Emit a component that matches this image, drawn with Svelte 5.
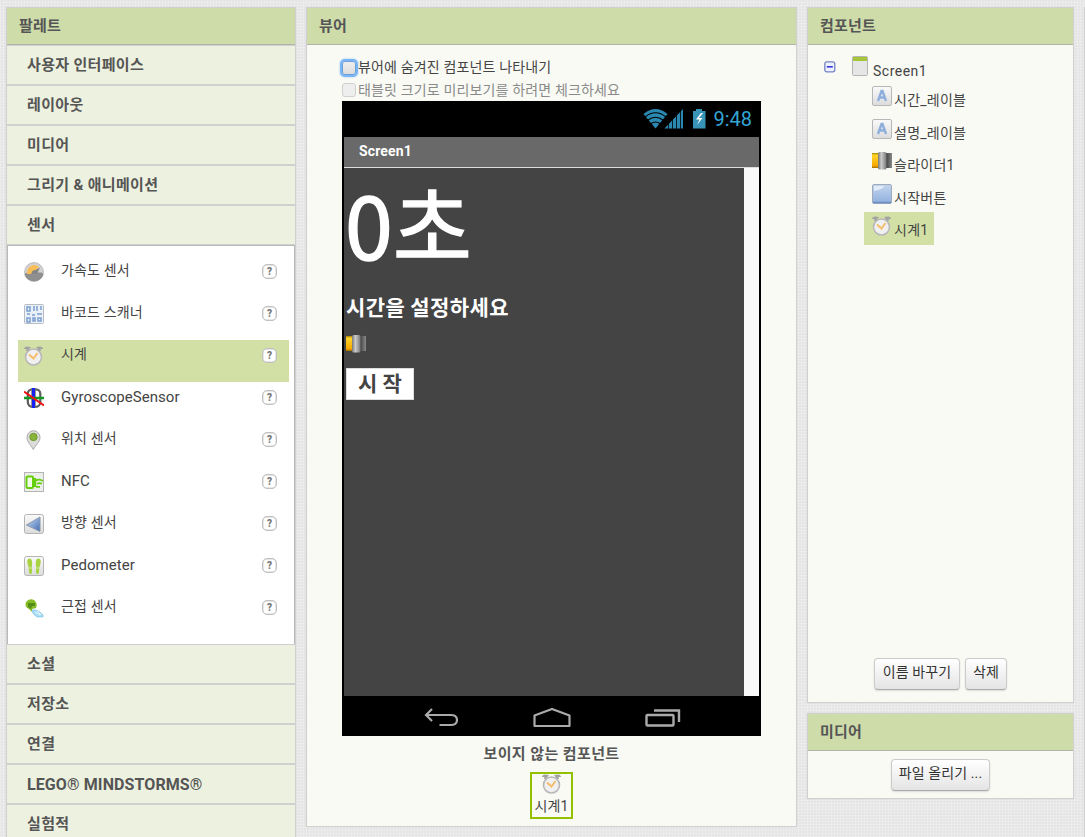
<script>
  const groupsTop = ['사용자 인터페이스', '레이아웃', '미디어', '그리기 & 애니메이션', '센서'];
  const groupsBottom = ['소셜', '저장소', '연결', 'LEGO® MINDSTORMS®', '실험적'];
  const sensors = [
    { icon: 'accel', label: '가속도 센서' },
    { icon: 'barcode', label: '바코드 스캐너' },
    { icon: 'clock', label: '시계', active: true },
    { icon: 'gyro', label: 'GyroscopeSensor', latin: true },
    { icon: 'location', label: '위치 센서' },
    { icon: 'nfc', label: 'NFC', latin: true },
    { icon: 'orient', label: '방향 센서' },
    { icon: 'pedo', label: 'Pedometer', latin: true },
    { icon: 'prox', label: '근접 센서' }
  ];
  const tree = [
    { icon: 'label', label: '시간_레이블' },
    { icon: 'label', label: '설명_레이블' },
    { icon: 'slider', label: '슬라이더1' },
    { icon: 'button', label: '시작버튼' },
    { icon: 'clock', label: '시계1', active: true }
  ];
</script>

<svg width="0" height="0" class="defs" aria-hidden="true">
  <defs>
    <linearGradient id="tile" x2="0" y2="1"><stop stop-color="#fafafa" /><stop offset="1" stop-color="#dcdcdc" /></linearGradient>
    <linearGradient id="gold" x2="0" y2="1"><stop stop-color="#a88400" /><stop offset=".15" stop-color="#ffd42a" /><stop offset=".85" stop-color="#f5a800" /><stop offset="1" stop-color="#a06c00" /></linearGradient>
    <linearGradient id="dark" x2="1" y2="0"><stop stop-color="#333" /><stop offset="1" stop-color="#8a8a8a" /></linearGradient>
    <linearGradient id="knob" x2="1" y2="0"><stop stop-color="#777" /><stop offset=".4" stop-color="#ccc" /><stop offset="1" stop-color="#777" /></linearGradient>
    <linearGradient id="blue" x2="0" y2="1"><stop stop-color="#c3d5ee" /><stop offset="1" stop-color="#8fafdd" /></linearGradient>
    <linearGradient id="nav" x2="1" y2="1"><stop stop-color="#cfe0f6" /><stop offset="1" stop-color="#3f6db5" /></linearGradient>
  </defs>
</svg>

{#snippet icon(name)}
  <svg class="icon" width="20" height="20" viewBox="0 0 20 20" fill="none">
    {#if name === 'accel'}
      <circle cx="10" cy="10" r="9.400" fill="#d2d2d2" stroke="#bbb" />
      <path d="M.5 12a9.600 8.500 0 0 0 19 0l-2-1.500H3z" fill="#8f8f8f" />
      <path d="M3 12A7.300 8 0 0 1 15 5l-3.500 4Q8 9 7.500 12z" fill="#f9bd58" />
      <path d="M7.500 12q0-4 4-4l4.500-2.500-3 6.500z" fill="#858585" />
    {:else if name === 'barcode'}
      <rect x=".5" y=".5" width="19" height="19" rx="1" fill="#e9f0f8" stroke="#b9bcc2" />
      <path d="M3 3h3v4H3zM3 14h3v4H3zM9 14h2v3H9zM14 14h3v3h-3zM10 2v5M13 2v5M17 2v4M3 10h3M8 11h3M13 10h5" stroke="#7d9fd0" stroke-width="1.500" />
    {:else if name === 'clock'}
      <path d="M0 3q0-2 3-2.500L7 1 4 5H2l.5-2zM19 3q0-2-3-2.500L12 1l3 4h2l-.5-2z" fill="#a3a3a3" />
      <circle cx="9.500" cy="11" r="8" fill="#f0f0f0" stroke="#b8b8b8" stroke-width="1.600" />
      <path d="M5 8.500l4.500 4 4-5.500" stroke="#f5bd6c" stroke-width="2" />
    {:else if name === 'gyro'}
      <rect x="3.800" y="1.300" width="12.500" height="17.500" rx="4.500" fill="#fff" stroke="#5d5d5d" stroke-width="2.200" />
      <path d="M9.500 0v20" stroke="#777" stroke-width="4.500" />
      <path d="M9.500 0v20" stroke="#1620f5" stroke-width="3" />
      <path d="M0 10h20" stroke="#119a22" stroke-width="2.500" />
      <path d="M0 3.500L20 17.500" stroke="#f01313" stroke-width="2" />
    {:else if name === 'location'}
      <path d="M9.300 19.500C7 15 3 12 3 7.500a6.500 6.800 0 0 1 13 0C16 12 11.500 15 9.300 19.500z" fill="#dcdcdc" stroke="#a9a9a9" />
      <circle cx="9.500" cy="7" r="3.700" fill="#88b43b" stroke="#6e9b2b" />
    {:else if name === 'nfc'}
      <rect x=".5" y=".5" width="19" height="19" fill="#eceee9" stroke="#b5b5b5" />
      <rect x="2.500" y="4.500" width="6.500" height="11.500" rx="1" fill="#f4fbe9" stroke="#65cf0b" stroke-width="2" />
      <path d="M11 6v9" stroke="#65cf0b" stroke-width="2.500" />
      <path d="M12 8.500q3.500-2 7 .5M13 11.800q2.500-1.500 5 0M12 14.800h4" stroke="#65cf0b" stroke-width="1.700" />
    {:else if name === 'orient'}
      <rect x=".5" y=".5" width="19" height="19" rx="2" fill="url(#tile)" stroke="#b5b5b5" />
      <path d="M2.500 11L16 3v14.500z" fill="url(#nav)" stroke="#8d9aac" />
    {:else if name === 'pedo'}
      <rect x=".5" y=".5" width="19" height="19" rx="2" fill="url(#tile)" stroke="#b5b5b5" />
      <path d="M5.500 2.500C8 2.500 8.500 6 8 9.500V16q0 2-1.500 2T5 15.500L4.500 11Q1.500 3 5.500 2.500zM14.500 2.500C12 2.500 11.500 6 12 9.500V16q0 2 1.500 2t1.500-2.500l.5-4.500q3-8-1-8.500z" fill="#a8d23f" />
      <path d="M4.500 12h4M11.500 12h4" stroke="#e4ecd0" stroke-width=".8" />
    {:else if name === 'prox'}
      <path d="M2 4q3-4 8-2 4 3 2 8l-4 1 0 3-3-3Q0 9 2 4z" fill="#86bd26" />
      <path d="M4 5h7v3H8l-1 3-3-2z" fill="#548d16" />
      <path d="M8 12q6-1 11 5v2h-6q-5-3-5-7z" fill="#a9dcf5" stroke="#81c5e8" stroke-width=".7" />
      <path d="M11 14l5 3M13 13l4 4" stroke="#fff" stroke-width=".7" />
    {:else if name === 'label'}
      <rect x=".5" y=".5" width="19" height="19" rx="1.500" fill="url(#tile)" stroke="#b7b7b7" />
      <path d="M6 15l3.500-10h1l3.500 10M7.500 11.500h5" stroke="#8eaedb" stroke-width="2.400" />
    {:else if name === 'slider'}
      <rect x="0" y="2" width="8" height="15" fill="url(#gold)" />
      <rect x="13" y="2" width="7" height="15" fill="url(#dark)" />
      <rect x="6" y="1" width="8.500" height="17.500" rx="1.500" fill="url(#knob)" />
    {:else if name === 'button'}
      <rect x=".5" y=".5" width="19" height="19" rx="1.500" fill="url(#blue)" stroke="#a0aabc" />
      <path d="M2 2h10q0 3-10 5z" fill="#e2ebf8" />
      <path d="M1 18.500h18" stroke="#6e8fc2" stroke-width="1.500" />
    {/if}
  </svg>
{/snippet}

<div class="page">
  <section class="panel palette">
    <h2>팔레트</h2>
    {#each groupsTop as g}
      <div class="group">{g}</div>
    {/each}
    <div class="sensors">
      {#each sensors as s}
        <div class="sensor" class:active={s.active}>
          {@render icon(s.icon)}
          <span class="name" class:latin={s.latin}>{s.label}</span>
          <span class="help">?</span>
        </div>
      {/each}
    </div>
    {#each groupsBottom as g}
      <div class="group" class:lego={g.startsWith('LEGO')}>{g}</div>
    {/each}
  </section>

  <section class="panel viewer">
    <h2>뷰어</h2>
    <div class="viewbody">
      <div class="check"><i class="box focus"></i><span>뷰어에 숨겨진 컴포넌트 나타내기</span></div>
      <div class="check dim"><i class="box"></i><span>태블릿 크기로 미리보기를 하려면 체크하세요</span></div>
      <div class="phone">
        <div class="status">
          <svg width="76" height="22" viewBox="0 0 76 22" fill="none">
            <path d="M12.500 20.500L0.500 6Q12.500-4 24.500 6z" fill="#2b88b1" />
            <path d="M2 9q10.500-8.500 21 0M4.500 12.500q8-6.500 16 0M7.500 16q5-4 10 0" stroke="#000" stroke-width="1.100" />
            <path d="M21.500 20.500L40 1v19.500z" fill="#2b88b1" />
            <path d="M25.500 14v8M29.500 8v14M33.500 5v17M37.500 2v20" stroke="#000" stroke-width=".8" />
            <path d="M50 3h3V1h6v2h3.500v17.500H50z" fill="#3793b8" />
            <path d="M58 5l-5 6.500h3.500L54 17l5.500-7h-3.500L60 5z" fill="#fff" />
          </svg>
          <span class="time">9:48</span>
        </div>
        <div class="title">Screen1</div>
        <div class="screen">
          <div class="canvas">
            <div class="big">0초</div>
            <div class="prompt">시간을 설정하세요</div>
            <div class="slide">{@render icon('slider')}</div>
            <div class="start">시 작</div>
          </div>
          <div class="scroll"></div>
        </div>
        <div class="nav">
          <svg width="34" height="20" viewBox="0 0 34 20" fill="none" stroke="#aaa" stroke-width="2.200"><path d="M8 1L2 7l6 6M2.500 7H27q6 0 6 5t-6 5H15.500" /></svg>
          <svg width="38" height="20" viewBox="0 0 38 20" fill="none" stroke="#aaa" stroke-width="2.200"><path d="M1.500 18V7.500L19 1l17.500 6.500V18z" stroke-linejoin="round" /></svg>
          <svg width="36" height="20" viewBox="0 0 36 20" fill="none" stroke="#aaa" stroke-width="2.400"><rect x="1.500" y="7" width="27" height="10.500" rx="1" /><path d="M9 2.500h25v11.500" /></svg>
        </div>
      </div>
      <div class="hiddentitle">보이지 않는 컴포넌트</div>
      <div class="hiddencomp">{@render icon('clock')}<span>시계1</span></div>
    </div>
  </section>

  <div class="side">
    <section class="panel comps">
      <h2>컴포넌트</h2>
      <div class="root">
        <svg width="12" height="12" viewBox="0 0 12 12" fill="none"><rect x=".8" y=".8" width="10" height="10" rx="2" fill="#eef0fb" stroke="#7483c4" stroke-width="1.300" /><path d="M2.800 5.800h6" stroke="#2a2ae0" stroke-width="1.500" /></svg>
        <svg class="scr" width="16" height="20" viewBox="0 0 16 20"><rect x=".5" y=".5" width="15" height="19" rx="1" fill="#e6e6e6" stroke="#b5b5b5" /><path d="M1 1h14v4H1z" fill="#a5c63b" /></svg>
        <span>Screen1</span>
      </div>
      <div class="nodes">
        {#each tree as n}
          <div class="node" class:active={n.active}>{@render icon(n.icon)}<span>{n.label}</span></div>
        {/each}
      </div>
      <div class="actions"><button class="rename">이름 바꾸기</button><button class="delete">삭제</button></div>
    </section>
    <section class="panel media">
      <h2>미디어</h2>
      <div class="actions"><button class="upload">파일 올리기 ...</button></div>
    </section>
  </div>
  <section class="panel next"></section>
</div>

<style>
  :global(body) { margin: 0; overflow: hidden; }
  .defs { position: absolute; }
  .page {
    height: 837px; overflow: hidden; box-sizing: border-box; padding: 7px 0 0 6px;
    display: flex; align-items: flex-start; gap: 10px;
    background-color: #e5e5e5;
    background-image:
      repeating-linear-gradient(0deg, rgba(255,255,255,.22) 0 1px, transparent 1px 3px),
      repeating-linear-gradient(90deg, rgba(255,255,255,.22) 0 1px, transparent 1px 3px);
    font: 14px/20px Roboto, "Noto Sans CJK KR", sans-serif; color: #444; letter-spacing: .15px;
  }
  .panel { box-sizing: border-box; border: 1px solid #d0d0d0; background: #f9faf4; flex: none; box-shadow: 0 0 2px rgba(0,0,0,.06); }
  h2 {
    margin: 0; height: 37px; box-sizing: border-box; border-bottom: 1px solid #b0b3a8; background: #cddca9;
    padding-left: 12px; font-size: 15px; line-height: 37px; font-weight: 700; color: #555; letter-spacing: .2px;
  }
  .palette { width: 290px; height: 850px; }
  .group {
    height: 40px; box-sizing: border-box; border: solid #d0d0d0; border-width: 1px 0; background: #edf1df;
    padding-left: 20px; font-size: 15px; line-height: 39px; font-weight: 700; color: #555; letter-spacing: .33px;
  }
  .group.lego { font-size: 16px; letter-spacing: .1px; }
  .sensors { height: 399px; box-sizing: border-box; background: #fff; border: solid #b8b8b8; border-width: 1px 1px 0; padding: 10px 5px 0 10px; }
  .sensor { height: 42px; display: flex; align-items: flex-start; box-sizing: border-box; padding: 6px 13px 0 6px; }
  .sensor.active, .node.active { background: #d2e0a6; }
  .name { flex: 1; margin: -2px 0 0 17px; }
  .name.latin { font-size: 15px; margin-top: -1px; letter-spacing: .05px; }
  .icon { display: block; flex: none; }
  .help {
    width: 15px; height: 15px; box-sizing: border-box; margin: 2px -1px 0 0; border: 1.500px solid #c0c0c0; border-radius: 5px;
    box-shadow: inset 0 0 0 .5px #d0d0d0;
    background: #fff; color: #777; font: 900 10px/13px Roboto, sans-serif; text-align: center;
  }

  .viewer { width: 491px; height: 820px; }
  .viewbody { padding: 11px 0 0 35px; }
  .check { height: 23px; display: flex; align-items: center; line-height: 20px; }
  .check span { margin-top: -2px; }
  .check.dim span { margin-top: -1px; }
  .check.dim { color: #8a8a8a; height: 22px; }
  .box { width: 12px; height: 12px; border: 1px solid #b5b5b5; border-radius: 3px; background: linear-gradient(#eee, #dcdcdc); margin-right: 2px; flex: none; }
  .dim .box { border-color: #d0d0d0; background: #eee; }
  .box.focus { box-shadow: 0 0 0 2px #7ab6f4, 0 0 2px 2px #8abfff; border-color: #6a9fd8; }
  .phone { width: 419px; height: 635px; background: #000; box-sizing: border-box; padding: 0 2px; }
  .status { height: 36px; display: flex; align-items: center; justify-content: flex-end; padding-right: 7px; }
  .status svg { margin-right: -6px; }
  .time { color: #33a5d5; font-size: 20px; line-height: 36px; letter-spacing: 0; }
  .title { height: 30px; background: #696969; border-bottom: 1px solid #ddd; color: #fff; font-weight: 700; line-height: 28px; padding-left: 15px; }
  .screen { height: 528px; display: flex; }
  .canvas { width: 400px; background: #444; color: #fff; padding-left: 2px; box-sizing: border-box; font-family: "Noto Sans CJK KR", sans-serif; }
  .scroll { flex: 1; background: #f9f9f9; }
  .big { font-size: 86px; line-height: 109px; height: 122px; letter-spacing: 0; margin-left: -1px; margin-right: 1px; -webkit-text-stroke: 1.400px #fff; }
  .prompt { font-size: 21px; line-height: 32px; height: 44px; font-weight: 700; letter-spacing: .4px; }
  .slide { height: 34px; }
  .start { width: 66px; height: 30px; border: 1px solid #ddd; background: #fff; color: #444; font-size: 21px; font-weight: 700; line-height: 26px; text-align: center; }
  .nav { height: 40px; display: flex; align-items: center; padding: 3px 78px 0 80px; justify-content: space-between; box-sizing: border-box; }
  .hiddentitle { width: 419px; text-align: center; font-size: 15px; font-weight: 700; color: #555; line-height: 20px; padding-top: 8px; letter-spacing: .4px; }
  .hiddencomp { width: 39px; height: 43px; border: 2px solid #94c000; margin: 8px 0 0 188px; display: flex; flex-direction: column; align-items: center; }
  .hiddencomp span { line-height: 25px; }

  .side { display: flex; flex-direction: column; gap: 10px; flex: none; }
  .side .panel { width: 267px; }
  .comps { height: 696px; display: flex; flex-direction: column; }
  .root { display: flex; align-items: flex-start; padding: 11px 0 0 16px; height: 26px; }
  .root > svg:first-child { margin-top: 5px; }
  .scr { margin-left: 16px; }
  .root span { margin: 5px 0 0 5px; letter-spacing: .5px; }
  .nodes { padding-left: 56px; flex: 1; }
  .node { width: fit-content; height: 32.500px; box-sizing: border-box; display: flex; padding: 4px 6px 0 8px; letter-spacing: .25px; }
  .node span { margin: 4px 0 0 2px; }
  .actions { display: flex; justify-content: center; gap: 5px; }
  .comps .actions { height: 44px; }
  button {
    height: 32px; box-sizing: border-box; padding: 0 0 4px; border: 1px solid #ccc; border-bottom-color: #aaa; border-radius: 4px;
    background: linear-gradient(#fff, #e4e4e4); box-shadow: 0 1px 2px rgba(0,0,0,.12);
    font: 14px/20px Roboto, "Noto Sans CJK KR", sans-serif; color: #333; letter-spacing: .1px;
  }
  .rename { width: 86px; }
  .delete { width: 42px; }
  .upload { width: 99px; }
  .media { height: 86px; }
  .media .actions { padding-top: 8px; }
  .next { width: 200px; height: 840px; }
</style>
